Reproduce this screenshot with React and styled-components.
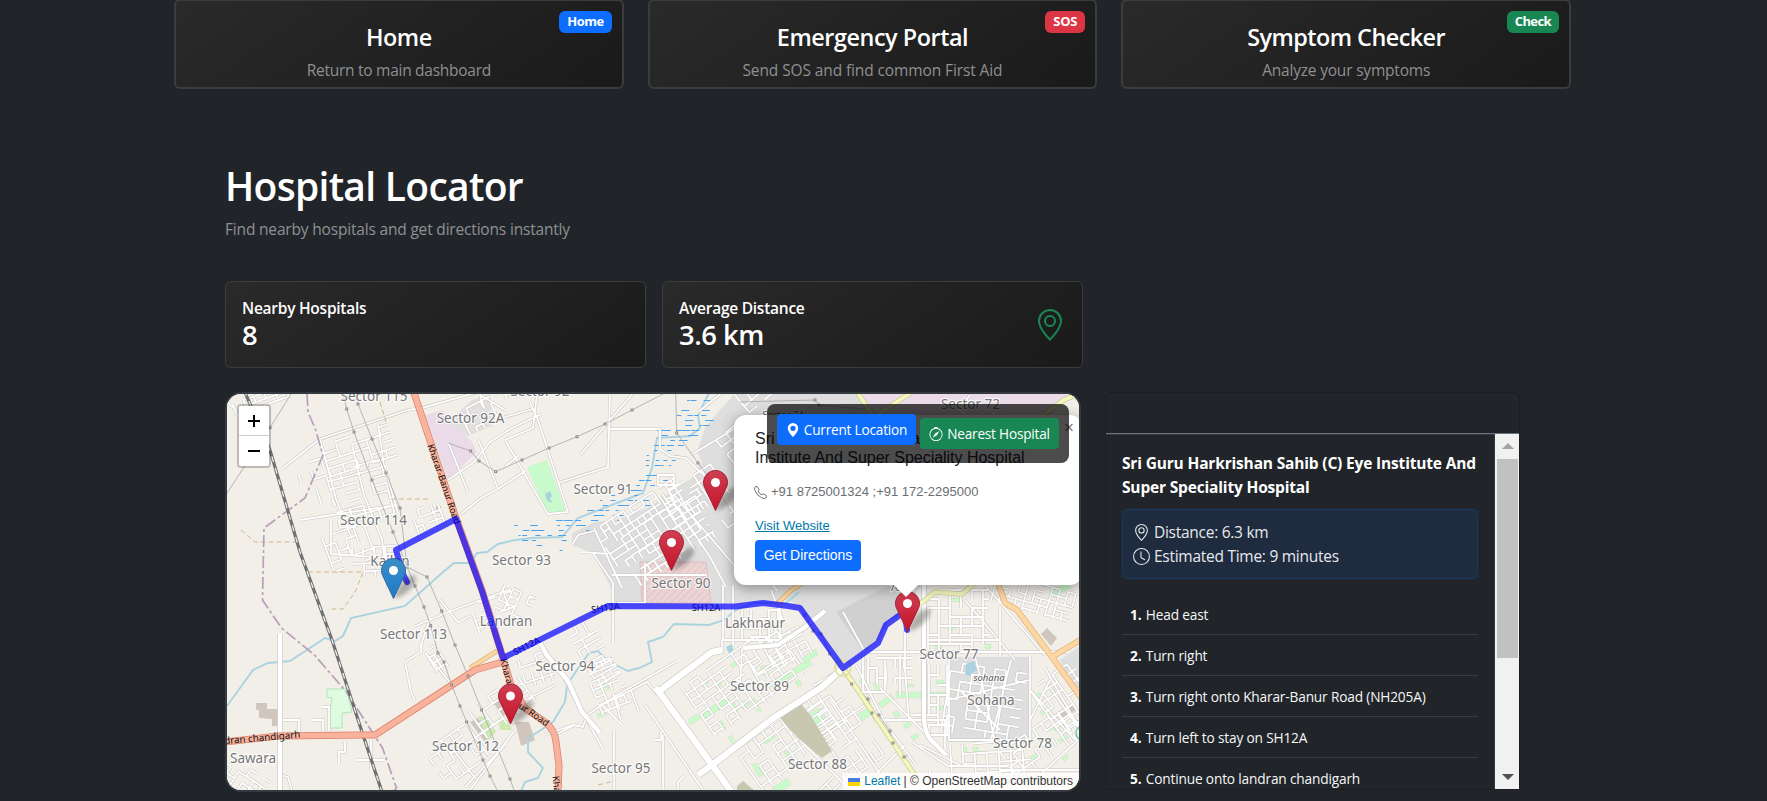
import React from 'react';
import styled, { createGlobalStyle, css } from 'styled-components';
import { BsGeoAlt, BsGeoAltFill, BsCompass, BsClock, BsTelephone } from 'react-icons/bs';

const Global = createGlobalStyle`
  *, *::before, *::after { box-sizing: border-box; }
  html, body { margin: 0; height: 100%; overflow: hidden; background: #212529; }
  body { color: #fff; font: 400 15.5px/1.5 "Open Sans", "Noto Sans", sans-serif; }
  h1, h2, h3, h4, h5, p, ol { margin: 0; padding: 0; font-weight: 400; }
`;

const Page = styled.div`
  height: 801px;
  overflow: hidden;
  background: #212529;
`;

const gradientCard = css`
  background: linear-gradient(145deg, #2a2a2a, #1a1a1a);
`;

/* ---------- top navigation cards ---------- */

const NavGrid = styled.nav`
  display: grid;
  grid-template-columns: repeat(3, 1fr);
  gap: 24px;
  width: 1397px;
  margin: -1px 0 0 174px;
`;

const NavCard = styled.a`
  ${gradientCard}
  position: relative;
  height: 90px;
  padding-top: 22px;
  border: 2px solid #3c3c3c;
  border-radius: 6px;
  text-align: center;
`;

const NavTitle = styled.h4`
  font-size: 23.4px;
  line-height: 29px;
  font-weight: 600;
  letter-spacing: ${(p) => p.$ls || '-0.53px'};
`;

const NavText = styled.p`
  margin-top: 6px;
  line-height: 24px;
  color: #8e9092;
  letter-spacing: ${(p) => p.$ls || '-0.2px'};
`;

const tones = { blue: '#0d6efd', red: '#dc3545', green: '#198754' };

const Badge = styled.span`
  position: absolute;
  top: 10px;
  right: 10px;
  height: 22px;
  padding: 0 8px;
  border-radius: 6px;
  background: ${(p) => tones[p.$tone]};
  font-size: 13px;
  line-height: 20px;
  font-weight: 700;
  letter-spacing: ${(p) => p.$ls || '-0.5px'};
`;

/* ---------- page body ---------- */

const Body = styled.main`
  width: 1297px;
  margin: 73px 0 0 225px;
`;

const Heading = styled.h1`
  font-size: 39px;
  line-height: 48px;
  font-weight: 600;
  letter-spacing: -0.72px;
`;

const Lead = styled.p`
  margin-top: 7px;
  line-height: 24px;
  color: #8e9194;
  letter-spacing: -0.18px;
`;

const Columns = styled.div`
  display: grid;
  grid-template-columns: 858px 415px;
  column-gap: 22px;
  align-items: end;
  margin-top: 40px;
`;

const Left = styled.section`
  display: flex;
  flex-direction: column;
  gap: 24px;
`;

const Stats = styled.div`
  display: flex;
  gap: 16px;
`;

const StatCard = styled.article`
  ${gradientCard}
  display: flex;
  align-items: center;
  justify-content: space-between;
  width: 421px;
  height: 87px;
  padding: 0 16px 0 16px;
  border: 1px solid #3c3c3c;
  border-radius: 6px;
`;

const StatBody = styled.div`
  align-self: flex-start;
  padding-top: 17px;
`;

const StatLabel = styled.h5`
  font-size: 15.5px;
  line-height: 19px;
  font-weight: 600;
  letter-spacing: -0.25px;
`;

const StatValue = styled.p`
  font-size: 27.4px;
  line-height: 34px;
  font-weight: 600;
  letter-spacing: -0.5px;
`;

const StatIcon = styled(BsGeoAlt)`
  width: 32px;
  height: 32px;
  color: #198754;
`;

/* ---------- map ---------- */

const MapFrame = styled.div`
  position: relative;
  width: 856px;
  height: 400px;
  overflow: hidden;
  border: 2px solid #343a40;
  border-radius: 16px;
  background: #f2efe9;
`;

const MapSvg = styled.svg`
  display: block;
  width: 852px;
  height: 396px;
`;

const ZoomControl = styled.div`
  position: absolute;
  top: 10px;
  left: 10px;
  width: 34px;
  overflow: hidden;
  border: 2px solid rgba(0, 0, 0, 0.22);
  border-radius: 4px;
  background-clip: padding-box;
`;

const ZoomButton = styled.button`
  display: flex;
  align-items: center;
  justify-content: center;
  width: 30px;
  height: 29px;
  padding: 0;
  border: 0;
  background: #fff;
  & + & { border-top: 1px solid #ccc; height: 31px; }
`;

const Popup = styled.div`
  position: absolute;
  top: 21px;
  left: 507px;
  width: 348px;
  height: 170px;
  padding: 14px 21px;
  border-radius: 12px;
  background: #fff;
  box-shadow: 0 3px 14px rgba(0, 0, 0, 0.4);
  color: #333;
  font-family: "Liberation Sans", Arial, sans-serif;
  &::after {
    content: "";
    position: absolute;
    top: 170px;
    left: 160px;
    border: 12px solid transparent;
    border-top-color: #fff;
    border-bottom: 0;
  }
`;

const PopupTitle = styled.h5`
  font-size: 16px;
  line-height: 19px;
  letter-spacing: -0.02px;
  color: #212529;
`;

const PopupPhone = styled.p`
  display: flex;
  align-items: center;
  gap: 4px;
  margin-top: 16px;
  font-size: 13px;
  line-height: 18px;
  color: #6a6e72;
  svg { margin-left: -1px; }
`;

const PopupLink = styled.a`
  display: block;
  width: max-content;
  margin-top: 16px;
  font-size: 13px;
  line-height: 18px;
  color: #0078a8;
  text-decoration: underline;
`;

const PopupClose = styled.span`
  position: absolute;
  top: 4px;
  right: 8px;
  font-size: 17px;
  line-height: 18px;
  color: #757575;
`;

const Button = styled.button`
  display: flex;
  align-items: center;
  justify-content: center;
  gap: 4px;
  height: 31px;
  padding: 0;
  width: ${(p) => p.$w}px;
  border: 0;
  border-radius: 4px;
  background: ${(p) => tones[p.$tone]};
  color: #fff;
  font: 400 13.6px/20px "Open Sans", "Noto Sans", sans-serif;
  letter-spacing: -0.2px;
  white-space: nowrap;
  svg { width: 14px; height: 14px; }
`;

const PopupButton = styled(Button)`
  margin-top: 5px;
  padding: 0 0 1px;
  font-family: "Liberation Sans", Arial, sans-serif;
  font-size: 14px;
  letter-spacing: 0;
`;

const MapActions = styled.div`
  position: absolute;
  top: 10px;
  right: 10px;
  display: flex;
  align-items: flex-start;
  gap: 4px;
  width: 302px;
  height: 59px;
  padding: 10px;
  border-radius: 8px;
  background: rgba(0, 0, 0, 0.7);
  ${Button} + ${Button} { margin-top: 4px; }
`;

const Attribution = styled.div`
  position: absolute;
  right: 0;
  bottom: 0;
  display: flex;
  align-items: center;
  height: 17px;
  padding: 0 6px 0 5px;
  background: rgba(255, 255, 255, 0.8);
  color: #333;
  font: 12px/17px "Liberation Sans", Arial, sans-serif;
  white-space: pre;
  a { color: #0078a8; margin-left: 4px; }
`;

/* ---------- directions ---------- */

const Directions = styled.aside`
  display: flex;
  flex-direction: column;
  height: 398px;
  margin-bottom: 2px;
  overflow: hidden;
  border: 1px solid #1b1e21;
  border-radius: 5px 5px 0 0;
`;

const DirectionsHead = styled.header`
  flex: none;
  height: 41px;
  margin: 0 -1px;
  border-bottom: 1px solid #6c757d;
`;

const DirectionsMain = styled.div`
  display: flex;
  height: 356px;
  margin: 0 -1px;
  border-left: 1px solid #3f4347;
`;

const DirectionsList = styled.div`
  flex: 1;
  height: 356px;
  overflow: hidden;
  padding: 16px 16px 0;
  border-right: 1px solid #34383c;
  border-top: 1px solid #343a40;
`;

const HospitalName = styled.h5`
  font-size: 15.5px;
  line-height: 24px;
  font-weight: 700;
  letter-spacing: -0.17px;
  white-space: nowrap;
`;

const Summary = styled.div`
  height: 70px;
  margin-top: 10px;
  padding: 10px;
  border: 1px solid #163a6c;
  border-radius: 5px;
  background: #1f2b3f;
`;

const SummaryLine = styled.p`
  display: flex;
  align-items: center;
  gap: 4px;
  line-height: 24px;
  color: #e6e9ec;
  letter-spacing: -0.27px;
  svg { width: 17px; height: 17px; }
`;

const Steps = styled.ol`
  margin-top: 15px;
  list-style: none;
`;

const Step = styled.li`
  height: 41px;
  padding: 1px 0 0 8px;
  border-bottom: 1px solid #373b3f;
  color: #f6f7f8;
  font-size: 13.7px;
  line-height: 40px;
  letter-spacing: -0.17px;
  white-space: nowrap;
  b { color: #fff; margin-right: 1px; }
`;

const Scrollbar = styled.div`
  display: flex;
  flex-direction: column;
  align-items: center;
  justify-content: space-between;
  width: 25px;
  padding: 9px 0 10px;
  background: #f1f1f1;
`;

const Thumb = styled.div`
  width: 21px;
  height: 199px;
  margin: 10px 0 auto;
  background: #c1c1c1;
`;

const Arrow = styled.div`
  width: 0;
  height: 0;
  border: 6px solid transparent;
  ${(p) => (p.$up
    ? css`border-bottom-color: #a3a3a3; border-top: 0;`
    : css`border-top-color: #505050; border-bottom: 0;`)}
`;

/* ---------- map drawing ---------- */

function makeRandom(seed) {
  let s = seed;
  return () => {
    s = (s * 16807) % 2147483647;
    return s / 2147483647;
  };
}

/* Streets of one block: origin, extent along two axes, angle, spacing and share of missing pieces. */
function streets([x, y, w, h, deg, dx, dy, gap, seed]) {
  const rnd = makeRandom(seed);
  const a = (deg * Math.PI) / 180;
  const at = (u, v) => `${(x + u * Math.cos(a) - v * Math.sin(a)).toFixed(1)} ${(y + u * Math.sin(a) + v * Math.cos(a)).toFixed(1)}`;
  let d = '';
  for (let v = 0; v <= h; v += dy) {
    for (let u = 0; u < w; u += dx) {
      if (rnd() > gap) d += `M${at(u, v)}L${at(Math.min(w, u + dx), v)}`;
    }
  }
  for (let u = 0; u <= w; u += dx) {
    for (let v = 0; v < h; v += dy) {
      if (rnd() > gap) d += `M${at(u, v)}L${at(u, Math.min(h, v + dy))}`;
    }
  }
  return d;
}

const minorBlocks = [
  [321, 446, 70, 32, -18, 15, 8, 0.35, 7],
  [326, 474, 60, 60, -15, 14, 8, 0.4, 17],
  [296, 466, 26, 50, -17, 13, 9, 0.45, 27],
  [322, 538, 44, 36, -20, 11, 9, 0.4, 37],
  [352, 548, 44, 30, -3, 11, 8, 0.4, 47],
  [411, 512, 28, 28, -20, 7, 8, 0.4, 57],
  [233, 404, 56, 12, -20, 11, 6, 0.35, 67],
  [228, 755, 50, 30, 33, 9, 8, 0.3, 77],
  [459, 412, 34, 26, -27, 8, 7, 0.2, 87],
  [480, 395, 50, 14, -18, 12, 8, 0.4, 88],
  [594, 530, 96, 22, -33, 7, 7, 0.25, 97],
  [606, 548, 110, 22, -33, 9, 7, 0.3, 107],
  [625, 560, 90, 30, -33, 8, 8, 0.3, 117],
  [660, 497, 60, 34, -33, 10, 9, 0.35, 127],
  [518, 660, 32, 30, -18, 9, 8, 0.3, 137],
  [566, 630, 26, 66, -30, 9, 8, 0.35, 147],
  [584, 668, 32, 52, -22, 9, 8, 0.35, 157],
  [682, 688, 110, 60, -35, 10, 8, 0.25, 167],
  [745, 655, 60, 30, -28, 10, 8, 0.25, 177],
  [735, 750, 100, 50, -35, 11, 9, 0.25, 187],
  [838, 690, 80, 40, 55, 10, 10, 0.35, 207],
  [868, 658, 44, 26, 0, 9, 10, 0.5, 217],
  [928, 590, 60, 60, 0, 11, 9, 0.35, 227],
  [929, 665, 20, 70, 0, 9, 10, 0.35, 237],
  [952, 662, 76, 70, 9, 11, 9, 0.35, 247],
  [1030, 690, 50, 60, -35, 9, 9, 0.3, 257],
  [950, 745, 80, 40, -4, 12, 10, 0.35, 267],
  [1000, 752, 80, 34, -35, 10, 9, 0.3, 277],
  [425, 752, 50, 40, -35, 10, 8, 0.35, 287],
  [468, 710, 60, 34, -35, 12, 9, 0.3, 297],
  [425, 652, 12, 24, -32, 6, 7, 0.2, 307],
  [470, 606, 44, 30, -20, 9, 8, 0.45, 317],
  [742, 610, 40, 28, 0, 9, 9, 0.4, 327],
  [734, 394, 110, 24, -40, 10, 8, 0.25, 337],
  [716, 440, 40, 60, -38, 12, 9, 0.35, 347],
  [722, 520, 26, 90, -38, 10, 10, 0.5, 357],
  [840, 770, 60, 40, 45, 10, 10, 0.3, 367],
  [999, 572, 80, 30, 16, 8, 7, 0.3, 377],
  [505, 585, 34, 30, 24, 9, 8, 0.45, 387],
  [970, 395, 110, 22, 38, 11, 9, 0.3, 397],
];

const minorPaths = minorBlocks.map(streets).join('');

const minorExtra = [
  'M227 402l8 7M320 439L408 410M283 468L320 439M320 439l16 60 16 40M352 445l12 50 18 44 6 50M378 425l6 40 14 48M408 410l14-2 70-20M300 520L390 506M331 520v34l56 4',
  'M505 440l28-12 4-34M505 440l43 74 20-2-30-92-8-18M533 409l-28 8M558 483l50-16 2-73M608 429h52v20l10 7 16 2 12 12 12 10 30 40 14 30M658 475h16v10h-16zM505 467l14-12',
  'M572 545l6-10 16-4M582 552l26 2M594 528l28 60M640 385l-60 70M670 497l40 60 16 30M593 553l20 30v60M612 575l95 0M615 603l30 0 0-40M698 412l40-32M691 455l43-26M674 495l60 70',
  'M448 480l26-18 16-20 22-14 30-14M461 514l20-16 17-9 27-18M498 489l-20-50M448 442l20 50 M505 410l-26-16',
  'M415 626l36-15 60-22M430 618l-10 30M405 662l16-10 1-10M405 662l6 30 4 9M427 655l22 26M440 600l18 22 12-6',
  'M281 720h18v12M313 720h10v14M322 707h7v24M339 764v-12h6v-10M280 775l8 2 4 14M358 760h26M371 740v30',
  'M515 705l28-14 12-6M553 659l50 90M545 735l28-10 10 2 4-12 30-20 30-17 30-17M602 705l20 20M613 693l8 28M631 690l8 22M602 705l45-23 10 12M614 730v62M663 735v54M645 705l60 88M655 740h6v-8M573 726l-20 10',
  'M723 585v55M733 585v60M742 650l-2 35M742 640v-20M722 640h58v-36M771 590l12 30M722 640v14',
  'M868 652h200M925 585v130M913 715h25M926 640h72M863 652v40h22M885 660v30M905 630v40l4 50M900 655v40M915 720h30v30M915 720l-40 0-10-26M1030 656v84M949 740h80M949 656v84M975 656l10 40 10 46M949 700l80-20M1011 660l-20 80M960 690l40 40M1000 770h80M1050 680l-20 40M912 742l36 24 60 0M880 688l50 50M860 790l45-45M920 745l40 20M930 770v20',
  'M843 612l22 40M843 668l-30 18M856 665l30 60 30 40M830 700l50 74M805 745l60-40M850 790l-50-50',
  'M985 585l60 70M965 600l50 60M1000 610v46M1078 740l-60 55M1045 668l34 60M1030 690l45 50M470 790l45-60M500 720l-45 32 20 26M505 745l-40 42M560 785l6 8M678 790v-8l6-6',
].join('');

const mainRoads = 'M540 642l6 12 22 27 14 31 18 21M743 648l35-3 27-18 20-16M280 634v157M924 585v130q0 20 10 28l12 12';
const avenues = 'M658 692l54-40 10-2M655 688l5 5 50 69 26 36M698 775l14-10 60-46 50-32 21-19';

const parks = [
  [688, 720, 12, 6, -34], [702, 713, 30, 7, -34], [770, 682, 45, 6, -30],
  [730, 705, 5, 9, -28], [740, 705, 9, 5, -34], [700, 683, 7, 5, -34], [714, 685, 7, 4, -34], [751, 700, 4, 14, -28],
  [728, 737, 4, 8, -30], [752, 765, 5, 14, -30], [763, 740, 12, 5, -34], [784, 752, 5, 8, -30], [772, 788, 18, 8, -34], [718, 722, 4, 10, -28],
  [760, 668, 6, 9, -28], [795, 682, 5, 6, -30], [730, 665, 7, 4, -34],
  [802, 658, 16, 6, -34], [858, 714, 14, 8, -34], [878, 703, 16, 6, -34], [896, 692, 26, 6, 0], [930, 692, 17, 5, 0],
  [808, 714, 14, 17, -28],
  [859, 680, 5, 7, -28], [873, 684, 4, 8, -28], [893, 713, 5, 6, -28], [903, 725, 7, 5, -34], [911, 737, 7, 4, -34],
  [936, 680, 8, 4, 0], [936, 706, 8, 4, 0], [935, 645, 7, 4, 0], [953, 598, 10, 4, 0], [985, 644, 6, 5, 0], [948, 626, 8, 4, 0],
  [962, 747, 5, 5, 0], [973, 747, 5, 5, 0], [908, 684, 6, 3, 0], [1035, 695, 5, 4, -34], [1050, 690, 4, 5, -34], [1040, 712, 6, 4, -34],
  [1052, 728, 8, 4, -34], [1058, 740, 10, 4, -34], [997, 772, 8, 4, -34], [1062, 758, 6, 4, -34], [1030, 757, 8, 4, -34],
  [602, 682, 4, 10, -30], [597, 714, 9, 4, -20], [1051, 592, 20, 6, -30],
];

const hatch = (() => {
  const rnd = makeRandom(911);
  const spine = [[522, 530], [552, 538], [580, 520], [612, 508], [640, 492], [655, 462], [668, 438], [684, 432], [694, 412], [703, 402]];
  let d = '';
  for (let i = 0; i < spine.length - 1; i += 1) {
    for (let k = 0; k < 15; k += 1) {
      const t = rnd();
      const px = spine[i][0] + t * (spine[i + 1][0] - spine[i][0]) + (rnd() - 0.5) * 24;
      const py = Math.round((spine[i][1] + t * (spine[i + 1][1] - spine[i][1]) + (rnd() - 0.5) * 26) / 5) * 5;
      d += `M${px.toFixed(1)} ${Math.max(398, py)}.5h${(2 + rnd() * 5).toFixed(1)}`;
    }
  }
  return d;
})();

const powerLines = [
  [[343, 394], [346.7, 409], [354, 432], [372, 480], [393, 532], [415, 586], [424, 607], [430.7, 625.7], [438, 653], [444, 662], [451.7, 685], [460, 706], [466.7, 722], [483, 760], [490, 776], [497, 790]],
  [[355, 394], [358, 404], [372, 439], [386, 473], [400, 508], [407, 567], [427, 577], [441.7, 611], [455, 645], [468, 676], [481.7, 710], [510, 779], [514, 790]],
  [[448, 443], [470.7, 451], [479, 461], [495.7, 471.7], [522, 460], [549, 448], [577, 436.7], [605, 424], [632, 410], [663, 394]],
  [[675.7, 394], [676.7, 433], [698, 463], [729, 506]],
  [[227, 493], [270, 427.7], [291, 394]],
  [[800, 608], [805, 615], [813, 631], [821, 634], [829.7, 654], [851.7, 684], [868, 699], [872, 713], [879, 715], [890, 731], [893, 743], [904, 757], [908, 755]],
  [[740, 402], [815, 400], [819, 405], [874, 410]],
];

const areaLabels = [
  ['Sector 115', 374, 401], ['Sector 92A', 470.5, 423], ['Sector 92', 540, 396], ['Sector 114', 373.5, 524.5], ['Kailon', 390, 565.5],
  ['Sector 113', 413.5, 639], ['Sector 93', 521.5, 565], ['Sector 91', 603, 493.5], ['Sector 90', 681, 588], ['Landran', 506, 626],
  ['Sector 94', 565, 671], ['Sector 95', 621, 773], ['Sector 112', 465.5, 751], ['Sawara', 253, 763], ['Lakhnaur', 755, 628],
  ['Sector 89', 759.5, 691], ['Sector 88', 817.5, 768.5], ['Sector 77', 949, 658.5], ['Sohana', 991, 704.5], ['Sector 78', 1022.5, 748], ['Sector 72', 970.5, 409],
];

const MapText = styled.text`
  font-family: "Noto Sans", "Open Sans", sans-serif;
  font-size: ${(p) => p.$size || 13.5}px;
  fill: ${(p) => p.$fill || '#777'};
  stroke: rgba(255, 255, 255, 0.75);
  stroke-width: ${(p) => (p.$thin ? 0 : 2.4)}px;
  stroke-linejoin: round;
  paint-order: stroke;
  text-anchor: middle;
  font-style: ${(p) => (p.$italic ? 'italic' : 'normal')};
`;

function Marker({ x, y, tone }) {
  return (
    <g transform={`translate(${x - 12.5} ${y - 41})`}>
      <path d="M13 41Q17 24 29 18Q38 15 34 25Q28 36 13 41z" fill="#000" opacity="0.28" filter="url(#soft)" />
      <path
        d="M12.5.5C5.9.5.5 5.9.5 12.5c0 2.4.8 4.6 1.8 6.4L12.5 40.4 22.7 18.9c1-1.8 1.8-4 1.8-6.4C24.5 5.9 19.1.5 12.5.5z"
        fill={`url(#${tone})`}
        stroke={tone === 'pinRed' ? '#a32338' : '#2a6ca3'}
      />
      <circle cx="12.5" cy="12.5" r="4.5" fill="#fff" />
    </g>
  );
}

function CityMap() {
  const southRoad = 'M503 658l8 27 14 23 20 14q10 8 11 20l3 23-1 27';
  const northRoad = 'M413 390l43 128 26 72 21 68';
  const westRoad = 'M225 742l53-6 84-1h13l77-50 23-15 24-7 6-2';
  const eastRoad = 'M998 583l7 20 12 7 35 47 30 42M1052 657l30-18';
  const yellow = 'M843 668l75 112M920 604l15-12 27 2 13-11M856 390l14 22M915 390l-40 26 M1042 416l22-16 18-8M1052 800l30-20';
  const railway = 'M244 390L270 450 300 552 332 640 363 735 382 792';
  const boundary = 'M307 394l1 18 7 16 8 27-18 43-41 30-1.5 72 19 28 33 27 32 37 36 56 14 40-4 4';
  const water = 'M227 706l26-36 15-7 22-2 35-23 10 3 8-5 8-18 54-12 37-33 12-10 16 0 7-10 10-1 11-8 17-4 17-2 30-1 16-19 65-25 9-25 5-30 33-2 10-8-2-13 12-24';
  const water2 = 'M521 791l4-9 13-4 5-10-15-16 0-14 10-6 15-10 12-20 2-17 10-15 12-17 9-2 8 9 22 11 11-3 13-6-4-20 15-5 11-13 35 1 15-5 12-10 17-7 33 0 13-11';
  const route = 'M407 582L403 574 396 550 456 519 482 591 503 658 598 611 608 606 735 606.5 763 603 788 606 800 608 843 668 878 643 886 625 900 615 905 613 907 630';
  return (
    <MapSvg viewBox="227 394 852 396" aria-label="Map">
      <defs>
        <filter id="soft" x="-30%" y="-30%" width="160%" height="160%"><feGaussianBlur stdDeviation="2.2" /></filter>
        <linearGradient id="pinRed" x1="0" y1="0" x2="0" y2="1"><stop offset="0" stopColor="#cf3f52" /><stop offset="1" stopColor="#c51429" /></linearGradient>
        <linearGradient id="pinBlue" x1="0" y1="0" x2="0" y2="1"><stop offset="0" stopColor="#3b8ec6" /><stop offset="1" stopColor="#1f79c8" /></linearGradient>
        <pattern id="stripes" width="5" height="5" patternUnits="userSpaceOnUse" patternTransform="rotate(45)">
          <rect width="5" height="5" fill="#ecd4d4" /><path d="M0 0v5" stroke="#e3bcbf" strokeWidth="1.5" />
        </pattern>
      </defs>
      <rect x="227" y="394" width="852" height="396" fill="#f2efe9" />

      <path d="M735 394L718 412 705 428 697 452 702 462 692 478 648 508 620 519 595 522 572 533 572 545 593 553 612 590 615 603 735 603 790 600 805 612 843 664 876 641 886 620 907 605 925 580V394z" fill="#dedede" />
      <path d="M836 612L900 580 907 612 888 622 878 640 864 652z" fill="#d0d0d0" />
      <path d="M858 394l14 22 170-2 37-18v-4H858z" fill="#ebdbe8" />
      <path d="M948 657h82v85h-82z" fill="#dedede" />
      <path d="M1060 660l20-14v54z" fill="#dedede" />
      <path d="M425 415l17-5 30 32 5 10-29 28z" fill="#ebdbe8" />
      <path d="M448 422l24-22 18-6 2 32-24 10z" fill="#e2e0de" />
      <path d="M640 562l66 0 5 41h-69z" fill="url(#stripes)" stroke="#dfb6b9" strokeWidth="0.8" />
      <path d="M527 467l20-7 19 52-18 3z" fill="#c8facc" />
      <path d="M545 494l5-3 2 5-2 3 3 4-6-2z" fill="#aad3df" />
      <path d="M327 689h20v3l5 20-10 1v15h-12v-16l2-14-5-1z" fill="#dffce2" stroke="#9de6a3" strokeWidth="0.8" />
      <path d="M256 703h11v6h12v17h-7v-7l-13-1v-8h-3zM470 722l8-4 14 20-8 3zM494 704l10-6 8 14-9 4zM1041 634l6-6 10 10-6 8zM1059 712l14-8 3 6-13 9zM436 506h5v7h-5zM515 722l14 0 6 18-14 6z" fill="#d1c6bd" />
      <path d="M478 716l10 2 8 14-8 8zM498 718l10 2 4 10-12 0z" fill="#cdebb0" />
      <path d="M726 647l6-3 2 10-4 2z" fill="#aad3df" />

      <g fill="#c8facc" stroke="#e7a89c" strokeWidth="0.5" strokeDasharray="1 2">
        {parks.map(([x, y, w, h, r]) => <rect key={`${x}-${y}`} x={x} y={y} width={w} height={h} transform={`rotate(${r} ${x} ${y})`} />)}
      </g>

      <path d={water} fill="none" stroke="#aad3df" strokeWidth="1.9" />
      <path d={water2} fill="none" stroke="#aad3df" strokeWidth="1.9" />
      <path d={hatch} stroke="#4aa3ee" strokeWidth="1" />

      <path d={minorPaths + minorExtra} fill="none" stroke="#c9c6c2" strokeWidth="2.9" />
      <path d={minorPaths + minorExtra} fill="none" stroke="#fff" strokeWidth="1.8" />
      <path d="M780 718L801 704 811 716 832 751 822 758 798 738zM737 786l6-5 12 10h-18z" fill="#c8c7b0" />
      <path d="M966 664l8-3 3 9-8 6-4-2z" fill="#aad3df" />
      <path d={mainRoads} fill="none" stroke="#c8c6c2" strokeWidth="5.6" />
      <path d={mainRoads} fill="none" stroke="#fff" strokeWidth="4.4" />
      <path d={avenues} fill="none" stroke="#c8c6c2" strokeWidth="7.6" />
      <path d={avenues} fill="none" stroke="#fff" strokeWidth="6.4" />

      <path d="M391 499h40M241 530l14 12h45M308 572h55l-8 20-12 17h-15M598 785l16-4M380 402l6 20" fill="none" stroke="#cdb07a" strokeWidth="0.9" strokeDasharray="5 3" />
      <path d={boundary} fill="none" stroke="#b99fb8" strokeWidth="1.7" strokeDasharray="12 3 3 3" />

      <path d={railway} fill="none" stroke="#707070" strokeWidth="3.2" />
      <path d={railway} fill="none" stroke="#f4f4f4" strokeWidth="1.2" strokeDasharray="6 6" />

      <g fill="none" stroke="#9c9c9c" strokeWidth="0.7">
        {powerLines.map((line) => <polyline key={line[0].join()} points={line.map((p) => p.join()).join(' ')} />)}
      </g>

      <path d={yellow} fill="none" stroke="#c4c68a" strokeWidth="5" />
      <path d={yellow} fill="none" stroke="#f4f7be" strokeWidth="3.8" />
      <circle cx="843" cy="668" r="8" fill="none" stroke="#dfe3a0" strokeWidth="2" />
      <path d="M470 668l27-17M776 605l14-14 12-8" stroke="#dba95f" strokeWidth="4.6" fill="none" />
      <path d="M470 668l27-17M776 605l14-14 12-8" stroke="#fcd6a4" strokeWidth="3.4" fill="none" />
      <path d={eastRoad} fill="none" stroke="#dfa864" strokeWidth="6" />
      <path d={eastRoad} fill="none" stroke="#fcd6a4" strokeWidth="4.8" />
      <path d={`${northRoad}${southRoad}`} fill="none" stroke="#dd7f66" strokeWidth="7" />
      <path d={westRoad} fill="none" stroke="#dd7f66" strokeWidth="7" />
      <path d={`${northRoad}${southRoad}`} fill="none" stroke="#f9b29c" strokeWidth="5.6" />
      <path d={westRoad} fill="none" stroke="#f9b29c" strokeWidth="5.6" />
      <path d="M1083 726a7 7 0 1 0 0 14" fill="none" stroke="#72cdae" strokeWidth="1.5" />

      <g fill="#eee" stroke="#777" strokeWidth="0.8">
        {powerLines.flatMap((line) => line.slice(1, -1)).map(([x, y]) => <rect key={`${x}-${y}`} x={x - 1} y={y - 1} width="2" height="2" />)}
      </g>

      {areaLabels.map(([label, x, y]) => <MapText key={label} x={x} y={y}>{label}</MapText>)}
      <MapText x="989" y="681" $size={9.5} $italic $fill="#555">sohana</MapText>
      <MapText x="783" y="418" $size={9.5} $fill="#555">Sector 74</MapText>
      <MapText x="895" y="591" $size={9.5} $fill="#555">76</MapText>
      <g>
        <MapText $size={9.3} $fill="#111" $thin transform="translate(441 485) rotate(71)">Kharar-Banur Road</MapText>
        <MapText $size={9.8} $fill="#111" $thin transform="translate(255.5 741.5) rotate(-5)">landran chandigarh</MapText>
        <MapText $size={9.3} $fill="#111" $thin transform="translate(504 674) rotate(74)">Kharar</MapText>
        <MapText $size={9.3} $fill="#111" $thin transform="translate(532 717) rotate(34)">ur Road</MapText>
        <MapText $size={9.3} $fill="#111" $thin transform="translate(554 791) rotate(84)">Kharar</MapText>
        <MapText $size={9.3} $fill="#111" $thin transform="translate(528 649) rotate(-27)">SH12A</MapText>
        <MapText $size={9.3} $fill="#111" $thin transform="translate(606 611) rotate(-8)">SH12A</MapText>
        <MapText $size={9.3} $fill="#111" $thin transform="translate(706 611)">SH12A</MapText>
      </g>

      <path d={route} fill="none" stroke="#0000ff" strokeOpacity="0.7" strokeWidth="6" strokeLinejoin="round" strokeLinecap="round" />

      <Marker x={715.5} y={511} tone="pinRed" />
      <Marker x={671.5} y={571} tone="pinRed" />
      <Marker x={510.5} y={724.5} tone="pinRed" />
      <Marker x={393.5} y={599} tone="pinBlue" />
      <Marker x={907.5} y={632} tone="pinRed" />
    </MapSvg>
  );
}

const steps = [
  'Head east',
  'Turn right',
  'Turn right onto Kharar-Banur Road (NH205A)',
  'Turn left to stay on SH12A',
  'Continue onto landran chandigarh',
];

export default function App() {
  return (
    <Page>
      <Global />
      <NavGrid>
        <NavCard>
          <Badge $tone="blue">Home</Badge>
          <NavTitle>Home</NavTitle>
          <NavText $ls="-0.27px">Return to main dashboard</NavText>
        </NavCard>
        <NavCard>
          <Badge $tone="red" $ls="-0.2px">SOS</Badge>
          <NavTitle $ls="-0.45px">Emergency Portal</NavTitle>
          <NavText $ls="-0.11px">Send SOS and find common First Aid</NavText>
        </NavCard>
        <NavCard>
          <Badge $tone="green" $ls="-0.6px">Check</Badge>
          <NavTitle>Symptom Checker</NavTitle>
          <NavText>Analyze your symptoms</NavText>
        </NavCard>
      </NavGrid>

      <Body>
        <Heading>Hospital Locator</Heading>
        <Lead>Find nearby hospitals and get directions instantly</Lead>
        <Columns>
          <Left>
            <Stats>
              <StatCard>
                <StatBody>
                  <StatLabel>Nearby Hospitals</StatLabel>
                  <StatValue>8</StatValue>
                </StatBody>
              </StatCard>
              <StatCard>
                <StatBody>
                  <StatLabel>Average Distance</StatLabel>
                  <StatValue>3.6 km</StatValue>
                </StatBody>
                <StatIcon />
              </StatCard>
            </Stats>
            <MapFrame>
              <CityMap />
              <ZoomControl>
                <ZoomButton aria-label="Zoom in">
                  <svg width="12" height="12" viewBox="0 0 12 12"><path d="M6 0v12M0 6h12" stroke="#000" strokeWidth="2" /></svg>
                </ZoomButton>
                <ZoomButton aria-label="Zoom out">
                  <svg width="12" height="12" viewBox="0 0 12 12"><path d="M0 6h12" stroke="#000" strokeWidth="2" /></svg>
                </ZoomButton>
              </ZoomControl>
              <Popup>
                <PopupTitle>Sri Guru Harkrishan Sahib (C) Eye<br />Institute And Super Speciality Hospital</PopupTitle>
                <PopupPhone><BsTelephone />+91 8725001324 ;+91 172-2295000</PopupPhone>
                <PopupLink>Visit Website</PopupLink>
                <PopupButton $tone="blue" $w={106}>Get Directions</PopupButton>
                <PopupClose>×</PopupClose>
              </Popup>
              <MapActions>
                <Button $tone="blue" $w={139}><BsGeoAltFill />Current Location</Button>
                <Button $tone="green" $w={139}><BsCompass />Nearest Hospital</Button>
              </MapActions>
              <Attribution>
                <svg width="12" height="8" viewBox="0 0 12 8"><path fill="#4c7be1" d="M0 0h12v4H0z" /><path fill="#ffd500" d="M0 4h12v4H0z" /></svg>
                <a>Leaflet</a> | © OpenStreetMap contributors
              </Attribution>
            </MapFrame>
          </Left>

          <Directions>
            <DirectionsHead />
            <DirectionsMain>
              <DirectionsList>
                <HospitalName>Sri Guru Harkrishan Sahib (C) Eye Institute And<br />Super Speciality Hospital</HospitalName>
                <Summary>
                  <SummaryLine><BsGeoAlt />Distance: 6.3 km</SummaryLine>
                  <SummaryLine><BsClock />Estimated Time: 9 minutes</SummaryLine>
                </Summary>
                <Steps>
                  {steps.map((step, i) => <Step key={step}><b>{i + 1}.</b> {step}</Step>)}
                </Steps>
              </DirectionsList>
              <Scrollbar>
                <Arrow $up />
                <Thumb />
                <Arrow />
              </Scrollbar>
            </DirectionsMain>
          </Directions>
        </Columns>
      </Body>
    </Page>
  );
}
